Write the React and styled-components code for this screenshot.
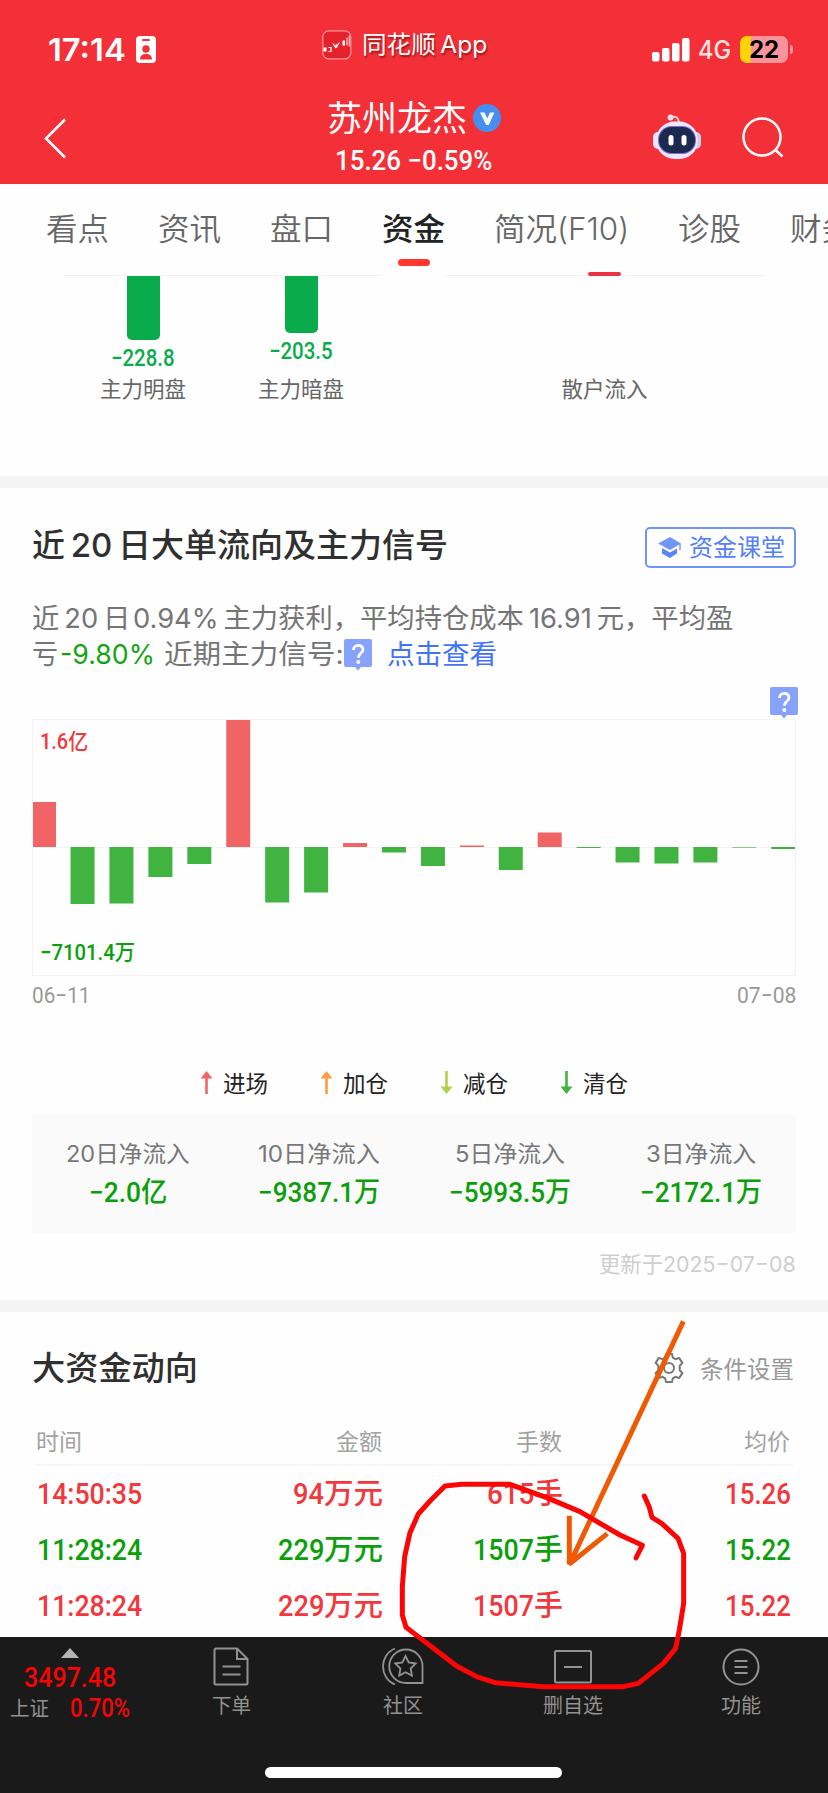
import React, { useLayoutEffect, useRef, useState } from 'react'
import styled, { createGlobalStyle } from 'styled-components'

const CJK = `'Noto Sans CJK SC', sans-serif`
const UI_FONT = `Inter, ${CJK}`
const DIN_FONT = `Roboto, ${CJK}`

const COLORS = {
  header: '#f33038',
  up: '#f2383d',
  down: '#0ba00b',
  barUp: '#f16466',
  barDown: '#41b341',
  link: '#4273f6',
}

// one value per trading day, in chart pixels above or below the zero line
const FLOW = [
  45, -57, -56.5, -30, -17, 127, -55.5, -45.5, 4, -5.5,
  -19, 1.5, -23, 14.5, -1, -15.5, -16.5, -15.5, -0.6, -2,
]

const TABS = [
  { name: '看点', width: 63 },
  { name: '资讯', width: 63 },
  { name: '盘口', width: 63 },
  { name: '资金', width: 63, active: true },
  { name: '简况(F10)', width: 135 },
  { name: '诊股', width: 63 },
  { name: '财务', width: 63 },
]

const LEGEND = [
  { name: '进场', color: '#f16466', up: true },
  { name: '加仓', color: '#ff9c40', up: true },
  { name: '减仓', color: '#add24a' },
  { name: '清仓', color: '#41b341' },
]

const SUMMARY = [
  { name: '20日净流入', width: 124, value: '−2.0亿', valueWidth: 78 },
  { name: '10日净流入', width: 122, value: '−9387.1万', valueWidth: 122 },
  { name: '5日净流入', width: 110, value: '−5993.5万', valueWidth: 122 },
  { name: '3日净流入', width: 110, value: '−2172.1万', valueWidth: 122 },
]

const DEALS = [
  { time: '14:50:35', amount: '94', amountWidth: 31, hands: '615', handsWidth: 47, price: '15.26', up: true },
  { time: '11:28:24', amount: '229', amountWidth: 46, hands: '1507', handsWidth: 61, price: '15.22' },
  { time: '11:28:24', amount: '229', amountWidth: 46, hands: '1507', handsWidth: 61, price: '15.22', up: true },
]

const GlobalStyle = createGlobalStyle`
  * {
    box-sizing: border-box;
  }

  body {
    margin: 0;
    background: #fefefe;
  }

  svg {
    display: block;
    flex: none;
  }
`

const FitBox = styled.span`
  display: inline-block;
  flex: none;
  white-space: nowrap;
  text-align: left;
`

const FitInner = styled.span`
  display: inline-block;
  transform-origin: left center;
`

// squeezes a piece of text horizontally into a given width
const FitText = ({ width, children, ...rest }) => {
  const ref = useRef(null)
  const [scale, setScale] = useState(1)

  useLayoutEffect(() => {
    setScale(width / ref.current.offsetWidth)
  }, [width, children])

  return (
    <FitBox {...rest} style={{ width }}>
      <FitInner ref={ref} style={{ transform: `scaleX(${scale})` }}>{children}</FitInner>
    </FitBox>
  )
}

const Page = styled.div`
  position: relative;
  width: 828px;
  height: 1793px;
  overflow: hidden;
  display: flex;
  flex-direction: column;
  background: #fefefe;
  font-family: ${UI_FONT};
`

const Header = styled.header`
  flex: none;
  height: 184px;
  background: ${COLORS.header};
  color: #ffffff;
`

const StatusBar = styled.div`
  display: grid;
  grid-template-columns: 322px 1fr auto;
  align-items: center;
  height: 98px;
  padding: 0 35px 0 0;
`

const Clock = styled.div`
  display: flex;
  align-items: center;
  gap: 10px;
  padding: 1px 0 0 48px;
  font-size: 31.5px;
  font-weight: 600;
  line-height: 40px;
`

const AppName = styled.div`
  display: flex;
  align-items: center;
  gap: 10px;
  padding-bottom: 8px;
  font-size: 24px;
  line-height: 30px;
  text-shadow: 1px 2px 2px rgba(90, 0, 0, .6);
`

const Signal = styled.div`
  display: flex;
  align-items: center;
  padding-top: 1px;
  font-size: 25px;
  font-weight: 500;
  color: #ffe1e2;

  svg {
    margin-right: 8px;
  }
`

const Battery = styled.div`
  width: 48px;
  height: 27px;
  margin-left: 9px;
  border-radius: 7px;
  background: linear-gradient(90deg, #ffd20a 11px, #f8949a 11px);
  color: #000000;
  font-size: 24px;
  font-weight: 700;
  line-height: 27px;
  text-align: center;
`

const BatteryTip = styled.div`
  width: 3px;
  height: 9px;
  margin-left: 2px;
  border-radius: 0 3px 3px 0;
  background: #f8949a;
`

const NavBar = styled.div`
  display: grid;
  grid-template-columns: 290px 1fr 290px;
  height: 86px;
`

const BackButton = styled.div`
  padding: 20px 0 0 43px;
`

const StockTitle = styled.div`
  display: flex;
  justify-content: flex-end;
  align-items: center;
  gap: 6px;
  height: 40px;
  padding-right: 37px;
  font-size: 35px;
  line-height: 40px;
`

const StockPrice = styled.div`
  padding-left: 45px;
  font-family: ${DIN_FONT};
  font-size: 28px;
  font-weight: 500;
  line-height: 46px;
`

const NavActions = styled.div`
  display: flex;
  align-items: flex-end;
  gap: 40px;
  height: 63px;
  padding: 0 0 1px 114px;
`

const Tabs = styled.nav`
  flex: none;
  display: flex;
  gap: 49px;
  height: 91px;
  padding-left: 46px;
  overflow: hidden;
`

const Tab = styled.div`
  flex: none;
  display: flex;
  flex-direction: column;
  align-items: center;
  padding-top: 23px;
  font-size: 31px;
  line-height: 44px;
  font-weight: ${({ $active }) => $active ? 500 : 350};
  color: ${({ $active }) => $active ? '#222222' : '#666666'};

  &::after {
    content: '';
    width: 32px;
    height: 7px;
    margin-top: 8px;
    border-radius: 4px;
    background: ${({ $active }) => $active ? '#ff382f' : 'transparent'};
  }
`

const SplitCharts = styled.section`
  flex: none;
  display: flex;
  gap: 65px;
  height: 201px;
  padding-left: 64px;
`

const SplitChart = styled.div`
  display: flex;
  justify-content: ${({ $center }) => $center ? 'center' : 'flex-start'};
  gap: 58px;
  width: 317px;
  height: 1px;
  padding-left: ${({ $center }) => $center ? 0 : 29}px;
  background: #f1f1f1;
`

const SplitColumn = styled.div`
  flex: none;
  display: flex;
  flex-direction: column;
  align-items: center;
  width: 100px;
  height: 129px;
`

const SplitBar = styled.div`
  width: 33px;
  height: ${({ $height }) => $height}px;
  margin-top: 1px;
  border-radius: 0 0 5px 5px;
  background: #09ab4b;
`

const RedMark = styled.div`
  width: 33px;
  height: 4px;
  margin-top: -3px;
  border-radius: 2px;
  background: #ee3045;
`

const SplitValue = styled.div`
  margin-top: 6px;
  font-family: ${DIN_FONT};
  font-size: 23px;
  font-weight: 500;
  line-height: 26px;
  color: #09ab4b;
`

const SplitLabel = styled.div`
  margin-top: auto;
  font-size: 21.5px;
  line-height: 30px;
  color: #666666;
`

const Divider = styled.div`
  flex: none;
  height: 12px;
  background: #f4f4f4;
`

const FlowSection = styled.section`
  flex: none;
  height: 812px;
  padding: 32px 32px 0 32px;
`

const SectionHead = styled.div`
  display: flex;
  align-items: center;
  justify-content: space-between;
  height: 50px;
`

const SectionTitle = styled.h2`
  margin: 0;
  font-size: 33px;
  font-weight: 500;
  line-height: 50px;
  color: #303030;
`

const CourseButton = styled.div`
  display: flex;
  align-items: center;
  gap: 7px;
  width: 151px;
  height: 41px;
  margin-top: 5px;
  padding-left: 11px;
  border: 2px solid #6f95fa;
  border-radius: 5px;
  font-size: 24px;
  line-height: 30px;
  color: #5580f6;
`

const Summary = styled.div`
  padding-top: 31px;
  color: #757575;
`

const SummaryLine = styled.div`
  display: flex;
  align-items: center;
  height: 36px;
  font-size: 27px;
  line-height: 36px;
`

const Loss = styled.span`
  margin: 0 9px 0 2px;
  color: #14a314;
`

const Link = styled.span`
  margin-left: 15px;
  color: ${COLORS.link};
`

const HelpRow = styled.div`
  display: flex;
  justify-content: flex-end;
  height: 46px;
  padding-top: 14px;
  margin-right: -2px;
`

const ChartFrame = styled.div`
  position: relative;
  width: 764px;
  height: 257px;
  border: 1px solid #f3f3f3;
`

const ChartLabel = styled.span`
  position: absolute;
  left: 7px;
  ${({ $top }) => $top ? 'top: 8px;' : 'bottom: 8px;'}
  font-family: ${DIN_FONT};
  font-size: 22px;
  font-weight: 500;
  line-height: 28px;
  color: ${({ $top }) => $top ? COLORS.up : COLORS.down};
`

const ChartDates = styled.div`
  display: flex;
  justify-content: space-between;
  height: 38px;
  font-family: ${DIN_FONT};
  font-size: 22.5px;
  line-height: 38px;
  color: #999999;
`

const Legend = styled.div`
  display: flex;
  justify-content: center;
  gap: 52px;
  height: 101px;
  padding-top: 53px;
`

const LegendItem = styled.div`
  display: flex;
  align-items: center;
  gap: 10px;
  height: 30px;
  font-size: 22.5px;
  color: #222222;
`

const TotalBox = styled.div`
  display: grid;
  grid-template-columns: repeat(4, 1fr);
  height: 118px;
  padding-top: 20px;
  background: #fafafa;
  text-align: center;
`

const TotalName = styled.div`
  font-size: 23px;
  line-height: 38px;
  color: #777777;
`

const TotalValue = styled.div`
  font-family: ${DIN_FONT};
  font-size: 28px;
  font-weight: 500;
  line-height: 39px;
  color: ${COLORS.down};
`

const UpdatedAt = styled.div`
  padding-top: 14px;
  font-size: 22px;
  line-height: 34px;
  text-align: right;
  color: #cfcfcf;
`

const DealsSection = styled.section`
  flex: none;
  height: 325px;
  padding: 31px 34px 0 32px;
`

const Settings = styled.div`
  display: flex;
  align-items: center;
  gap: 15px;
  font-size: 23.5px;
  color: #999999;
`

const DealRow = styled.div`
  display: grid;
  grid-template-columns: 110px 236px 180px 228px;
  margin-left: 4px;
  padding-left: 1px;
  width: 757px;
  height: 56px;
  align-items: center;
  font-family: ${DIN_FONT};
  font-size: 29px;
  font-weight: 500;
  color: ${({ $up }) => $up ? COLORS.up : COLORS.down};
`

const DealHead = styled(DealRow)`
  height: 50px;
  margin-top: 23px;
  padding: 4px 0 0;
  border-bottom: 2px solid #f5f5f5;
  font-family: ${UI_FONT};
  font-size: 23px;
  font-weight: 400;
  color: #a2a2a2;
`

const DealCell = styled.div`
  display: flex;
  align-items: baseline;
  justify-content: ${({ $left }) => $left ? 'flex-start' : 'flex-end'};
  line-height: 40px;
`

const BottomBar = styled.footer`
  flex: none;
  position: relative;
  display: flex;
  height: 156px;
  background: #1a1a1a;
  color: #929292;
`

const IndexQuote = styled.div`
  display: flex;
  flex-direction: column;
  align-items: center;
  width: 140px;
  padding-top: 11px;
`

const IndexValue = styled.div`
  margin-top: 5px;
  font-family: ${DIN_FONT};
  font-size: 28px;
  font-weight: 500;
  line-height: 30px;
  color: #f60505;
`

const IndexChange = styled.div`
  display: flex;
  gap: 21px;
  margin-top: 1px;
  font-size: 20px;
  line-height: 30px;
`

const IndexPercent = styled.span`
  font-family: ${DIN_FONT};
  font-size: 25px;
  font-weight: 500;
  color: #f60505;
`

const Menu = styled.div`
  display: flex;
  padding-left: 6px;
`

const MenuItem = styled.div`
  display: flex;
  flex-direction: column;
  align-items: center;
  width: 170px;
  padding: 10px 0 0 ${({ $shift }) => $shift || 0}px;
  font-size: 20px;
  line-height: 30px;

  svg {
    margin-bottom: 5px;
  }
`

const HomeIndicator = styled.div`
  position: absolute;
  left: 265px;
  bottom: 15px;
  width: 297px;
  height: 11px;
  border-radius: 6px;
  background: #ffffff;
`

const Markup = styled.svg`
  position: absolute;
  left: 380px;
  top: 1310px;
`

const BadgeIcon = () => (
  <svg width='20' height='27' viewBox='0 0 20 27'>
    <rect width='20' height='27' rx='4' fill='#fff' />
    <rect x='6' y='3' width='8' height='2' rx='1' fill={COLORS.header} />
    <circle cx='10' cy='13' r='3.7' fill={COLORS.header} />
    <path d='M4 23.5c0-4 2.6-5.6 6-5.6s6 1.6 6 5.6z' fill={COLORS.header} />
  </svg>
)

const AppIcon = () => (
  <svg width='30' height='30' viewBox='0 0 30 30'>
    <rect x='.8' y='.8' width='28' height='28' rx='6' fill='#e5222b' stroke='#ff9a9d' strokeWidth='1.2' />
    <path d='M1.500 17.500h3v4h-3zM20.500 10.500h2.500v5h-2.500zM13.500 14.500h2v3h-2z' fill='#fff' />
    <path d='M6.500 17.500h2.500v4H6.500M11 13.500l2.500 4 4-5' fill='none' stroke='#fff' strokeWidth='1.200' />
    <path d='M25 7.500v8M27.300 5.500v11' stroke='#ffb3b5' strokeWidth='1.400' />
  </svg>
)

const SignalIcon = () => (
  <svg width='38' height='24' viewBox='0 0 38 24' fill='#fff'>
    <rect x='0' y='14' width='7.500' height='9.500' rx='2' />
    <rect x='10' y='10' width='7.500' height='13.500' rx='2' />
    <rect x='20' y='5' width='7.500' height='18.500' rx='2' />
    <rect x='30' y='0' width='7.500' height='23.500' rx='2' />
  </svg>
)

const VerifiedIcon = () => (
  <svg width='28' height='28' viewBox='0 0 28 28'>
    <circle cx='14' cy='14' r='14' fill='#468fee' />
    <path d='M7 8.500h4.500l2.800 6 2.800-6h4.200L15.800 21h-2.600z' fill='#fff' />
  </svg>
)

const RobotIcon = () => (
  <svg width='50' height='46' viewBox='0 0 50 46'>
    <path d='M19 3c5-1 7 0 8 5' fill='none' stroke='#f3c9da' strokeWidth='2' />
    <circle cx='18.500' cy='3.500' r='3' fill='#e8dcf5' />
    <rect x='1' y='18' width='10' height='17' rx='5' fill='#e9e3fb' />
    <rect x='39' y='18' width='10' height='17' rx='5' fill='#cfc8f5' />
    <rect x='4' y='7.500' width='42' height='37.500' rx='18.500' fill='#ece8fa' />
    <rect x='6' y='12' width='38' height='28' rx='13.500' fill='#7c6bd6' />
    <rect x='7' y='13' width='36' height='26' rx='12.500' fill='#1d2a50' />
    <rect x='16.500' y='21' width='5' height='10.500' rx='2.500' fill='#fff' />
    <rect x='29.500' y='21' width='5' height='10.500' rx='2.500' fill='#fff' />
  </svg>
)

const SearchIcon = () => (
  <svg width='42' height='44' viewBox='0 0 42 44' fill='none' stroke='#fff' strokeWidth='2.500'>
    <circle cx='20' cy='21' r='18.500' />
    <path d='M33 33.500l7.500 7' />
  </svg>
)

const CapIcon = () => (
  <svg width='24' height='21' viewBox='0 0 24 21'>
    <path d='M12 0l11 6.500-11 6.500L0 6.500z' fill='#7097f8' />
    <path d='M4 11l8 4.500 7-4v5L12 21l-8-4.500z' fill='#5b87f6' />
    <path d='M22 7v6' stroke='#7097f8' strokeWidth='1.500' />
  </svg>
)

const HelpIcon = () => (
  <svg width='28' height='32' viewBox='0 0 28 32'>
    <path d='M2 0h24a2 2 0 0 1 2 2v24a2 2 0 0 1-2 2h-9l-3 3.500-3-3.500H2a2 2 0 0 1-2-2V2a2 2 0 0 1 2-2z' fill='#86a2fb' />
    <path d='M9.500 11c0-6 9.500-6 9.500-.5 0 4-4.600 3.600-4.600 8.300' fill='none' stroke='#fff' strokeWidth='2.800' />
    <circle cx='14.300' cy='23' r='2' fill='#fff' />
  </svg>
)

const LegendArrow = ({ color, up }) => (
  <svg width='13' height='23' viewBox='0 0 13 23' transform={up ? undefined : 'rotate(180)'}>
    <path d='M5.200 6h2.600v17H5.200z' fill={color} />
    <path d='M6.500 0l6 7.500H.5z' fill={color} />
  </svg>
)

const GearIcon = () => (
  <svg width='32' height='32' viewBox='0 0 32 32' fill='none' stroke='#777' strokeWidth='2'>
    <path d='M13 2h6l.8 3.600 2.700 1.600 3.600-1.300 3.300 5-2.700 2.800v4.600l2.700 2.800-3.300 5-3.600-1.300-2.700 1.600L19 30h-6l-.8-3.600-2.700-1.600-3.600 1.300-3.300-5 2.700-2.800v-4.600L2.600 10.900l3.300-5 3.600 1.300 2.700-1.600z' strokeLinejoin='round' />
    <circle cx='16' cy='16' r='5' />
  </svg>
)

const OrderIcon = () => (
  <svg width='36' height='39' viewBox='0 0 36 39' fill='none' stroke='#929292' strokeWidth='2'>
    <path d='M3 1.500h21l10.500 10.500v24a1.500 1.500 0 0 1-1.500 1.500H3A1.500 1.500 0 0 1 1.500 36V3A1.500 1.500 0 0 1 3 1.500z' />
    <path d='M24 1.500V12h10.500M9.500 19.500h18M9.500 27.500h18' />
  </svg>
)

const CommunityIcon = () => (
  <svg width='42' height='39' viewBox='0 0 42 39' fill='none' stroke='#929292' strokeWidth='1.800'>
    <path d='M13 1.500C-3 8-3 31 13 37.500' />
    <path d='M24 2.500a16.500 16.500 0 0 0 0 33.500h16.500V19A16.500 16.500 0 0 0 24 2.500z' />
    <path d='M23.500 9l3.200 6.500 7 1-5 5 1.200 7-6.400-3.300-6.300 3.300 1.200-7-5.100-5 7.100-1z' />
  </svg>
)

const RemoveIcon = () => (
  <svg width='38' height='39' viewBox='0 0 38 39' fill='none' stroke='#929292' strokeWidth='2'>
    <rect x='1' y='4' width='36' height='31.500' rx='1' />
    <path d='M10 20h18' />
  </svg>
)

const MoreIcon = () => (
  <svg width='38' height='39' viewBox='0 0 38 39' fill='none' stroke='#929292' strokeWidth='2'>
    <circle cx='19' cy='20' r='17.500' />
    <path d='M12.500 14h13M12.500 20h13M12.500 26h13' />
  </svg>
)

const FlowChart = () => (
  <svg width='762' height='255' viewBox='0 0 762 255'>
    <path d='M0 127.500h762' stroke='#f3f3f3' />
    {FLOW.map((value, i) => {
      const x = i === 0 ? 0 : i * 38.93 - 1.4
      return (
        <rect
          key={i}
          x={x}
          y={value > 0 ? 127 - value : 127}
          width={i === 0 ? 23 : 24}
          height={Math.abs(value)}
          fill={value > 0 ? COLORS.barUp : COLORS.barDown}/>
      )
    })}
  </svg>
)

const MENU = [
  { name: '下单', width: 39, icon: <OrderIcon /> },
  { name: '社区', width: 40, icon: <CommunityIcon />, shift: 4 },
  { name: '删自选', width: 60, icon: <RemoveIcon />, shift: 4 },
  { name: '功能', width: 40, icon: <MoreIcon /> },
]

const App = () => (
  <Page>
    <GlobalStyle />
    <Header>
      <StatusBar>
        <Clock>
          <FitText width={78}>17:14</FitText>
          <BadgeIcon />
        </Clock>
        <AppName>
          <AppIcon />
          <FitText width={125}>同花顺{'\u2009'}App</FitText>
        </AppName>
        <Signal>
          <SignalIcon />
          <FitText width={33}>4G</FitText>
          <Battery><FitText width={30}>22</FitText></Battery>
          <BatteryTip />
        </Signal>
      </StatusBar>
      <NavBar>
        <BackButton>
          <svg width='24' height='42' viewBox='0 0 24 42' fill='none' stroke='#fff' strokeWidth='2.500'>
            <path d='M22 1.500L3 20.500l19 19' />
          </svg>
        </BackButton>
        <div>
          <StockTitle>
            <FitText width={140}>苏州龙杰</FitText>
            <VerifiedIcon />
          </StockTitle>
          <StockPrice><FitText width={157}>15.26 −0.59%</FitText></StockPrice>
        </div>
        <NavActions>
          <RobotIcon />
          <SearchIcon />
        </NavActions>
      </NavBar>
    </Header>

    <Tabs>
      {TABS.map(({ name, width, active }) => (
        <Tab key={name} $active={active}><FitText width={width}>{name}</FitText></Tab>
      ))}
    </Tabs>

    <SplitCharts>
      <SplitChart>
        <SplitColumn>
          <SplitBar $height={64} />
          <SplitValue><FitText width={64}>−228.8</FitText></SplitValue>
          <SplitLabel><FitText width={86}>主力明盘</FitText></SplitLabel>
        </SplitColumn>
        <SplitColumn>
          <SplitBar $height={57} />
          <SplitValue><FitText width={64}>−203.5</FitText></SplitValue>
          <SplitLabel><FitText width={86}>主力暗盘</FitText></SplitLabel>
        </SplitColumn>
      </SplitChart>
      <SplitChart $center>
        <SplitColumn>
          <RedMark />
          <SplitLabel><FitText width={86}>散户流入</FitText></SplitLabel>
        </SplitColumn>
      </SplitChart>
    </SplitCharts>

    <Divider />

    <FlowSection>
      <SectionHead>
        <SectionTitle><FitText width={416}>近{'\u2009'}20{'\u2009'}日大单流向及主力信号</FitText></SectionTitle>
        <CourseButton>
          <CapIcon />
          <FitText width={96}>资金课堂</FitText>
        </CourseButton>
      </SectionHead>
      <Summary>
        <SummaryLine>
          <FitText width={701}>近{'\u2009'}20{'\u2009'}日{'\u200a'}0.94%{'\u2009'}主力获利，平均持仓成本{'\u2009'}16.91{'\u2009'}元，平均盈</FitText>
        </SummaryLine>
        <SummaryLine>
          <FitText width={26}>亏</FitText>
          <Loss><FitText width={95}>-9.80%</FitText></Loss>
          <FitText width={180}>近期主力信号: </FitText>
          <HelpIcon />
          <Link><FitText width={110}>点击查看</FitText></Link>
        </SummaryLine>
      </Summary>
      <HelpRow><HelpIcon /></HelpRow>
      <ChartFrame>
        <FlowChart />
        <ChartLabel $top><FitText width={48}>1.6亿</FitText></ChartLabel>
        <ChartLabel><FitText width={95}>−7101.4万</FitText></ChartLabel>
      </ChartFrame>
      <ChartDates>
        <FitText width={58}>06−11</FitText>
        <FitText width={59}>07−08</FitText>
      </ChartDates>
      <Legend>
        {LEGEND.map(({ name, color, up }) => (
          <LegendItem key={name}>
            <LegendArrow color={color} up={up} />
            <FitText width={45}>{name}</FitText>
          </LegendItem>
        ))}
      </Legend>
      <TotalBox>
        {SUMMARY.map(({ name, width, value, valueWidth }) => (
          <div key={name}>
            <TotalName><FitText width={width}>{name}</FitText></TotalName>
            <TotalValue><FitText width={valueWidth}>{value}</FitText></TotalValue>
          </div>
        ))}
      </TotalBox>
      <UpdatedAt><FitText width={197}>更新于2025−07−08</FitText></UpdatedAt>
    </FlowSection>

    <Divider />

    <DealsSection>
      <SectionHead>
        <SectionTitle><FitText width={166}>大资金动向</FitText></SectionTitle>
        <Settings>
          <GearIcon />
          <FitText width={94}>条件设置</FitText>
        </Settings>
      </SectionHead>
      <DealHead>
        <DealCell $left>时间</DealCell>
        <DealCell>金额</DealCell>
        <DealCell>手数</DealCell>
        <DealCell>均价</DealCell>
      </DealHead>
      {DEALS.map((deal, i) => (
        <DealRow key={i} $up={deal.up}>
          <DealCell $left><FitText width={105}>{deal.time}</FitText></DealCell>
          <DealCell>
            <FitText width={deal.amountWidth}>{deal.amount}</FitText>
            <FitText width={59}>万元</FitText>
          </DealCell>
          <DealCell>
            <FitText width={deal.handsWidth}>{deal.hands}</FitText>
            <FitText width={29}>手</FitText>
          </DealCell>
          <DealCell><FitText width={66}>{deal.price}</FitText></DealCell>
        </DealRow>
      ))}
    </DealsSection>

    <BottomBar>
      <IndexQuote>
        <svg width='18' height='10' viewBox='0 0 18 10'><path d='M9 0l9 10H0z' fill='#b5b5b5' /></svg>
        <IndexValue><FitText width={92}>3497.48</FitText></IndexValue>
        <IndexChange>
          <FitText width={39}>上证</FitText>
          <IndexPercent><FitText width={60}>0.70%</FitText></IndexPercent>
        </IndexChange>
      </IndexQuote>
      <Menu>
        {MENU.map(({ name, width, icon, shift }) => (
          <MenuItem key={name} $shift={shift}>
            {icon}
            <FitText width={width}>{name}</FitText>
          </MenuItem>
        ))}
      </Menu>
      <HomeIndicator />
    </BottomBar>

    <Markup width='448' height='400' viewBox='0 0 1344 1200' fill='none' strokeWidth='15'>
      <path d='M910 34L570 760M568 617V762L682 671' stroke='#f05a05' strokeLinejoin='bevel' />
      <path
        d='M768 744L787 706L720 675L600 605L500 563L390 523H245L195 528L150 573L115 612L90 668L74 740L67 830V915L78 952L125 988L230 1068L290 1100L345 1118L490 1130H730L775 1120L850 1060L887 1015L898 960L911 880V730L894 685L845 640L816 622L808 592L793 558'
        stroke='#fb0505'
        strokeLinejoin='round'
        strokeLinecap='round'/>
    </Markup>
  </Page>
)

export default App
